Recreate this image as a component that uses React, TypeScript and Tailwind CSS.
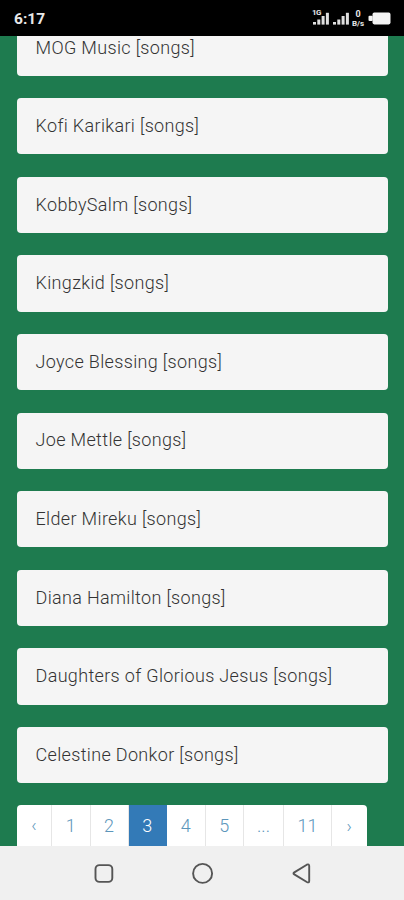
import React from 'react';

const artists = [
  'MOG Music',
  'Kofi Karikari',
  'KobbySalm',
  'Kingzkid',
  'Joyce Blessing',
  'Joe Mettle',
  'Elder Mireku',
  'Diana Hamilton',
  'Daughters of Glorious Jesus',
  'Celestine Donkor',
];

const pages = [
  { label: '‹', width: 'w-[35px]' },
  { label: '1', width: 'w-[38.5px]' },
  { label: '2', width: 'w-[38px]' },
  { label: '3', width: 'w-[38.5px]' },
  { label: '4', width: 'w-[38.5px]' },
  { label: '5', width: 'w-[38.5px]' },
  { label: '...', width: 'w-[40px]' },
  { label: '11', width: 'w-[48px]' },
  { label: '›', width: 'w-[34.5px]' },
];

const SignalBars: React.FC = () => (
  <svg width="16" height="13" viewBox="0 0 16 13" fill="#dedede">
    <rect x="0" y="10" width="3" height="2.6" />
    <rect x="4.3" y="7.5" width="3" height="5.1" />
    <rect x="8.6" y="4" width="3" height="8.6" />
    <rect x="12.9" y="0.8" width="3" height="11.8" />
  </svg>
);

const StatusBar: React.FC = () => (
  <header className="flex h-[35.5px] shrink-0 items-start justify-between bg-black pl-[14px] pr-[13px] text-[#e8e8e8]">
    <span className="mt-[9px] text-[15.5px] font-bold leading-5">6:17</span>
    <div className="mt-[9px] flex h-[18px] items-start">
      <div className="relative mt-[3px]">
        <SignalBars />
        <span className="absolute -left-px -top-[3px] text-[8px] font-bold leading-[8px] tracking-[-0.5px]">1G</span>
      </div>
      <div className="ml-[3.5px] mt-[3px]">
        <SignalBars />
      </div>
      <div className="ml-[2.5px] flex w-[14px] flex-col items-center text-[9px] font-bold leading-[10px]">
        <span>0</span>
        <span className="text-[8px] leading-[9px]">B/s</span>
      </div>
      <svg className="ml-[3px] mt-[3px]" width="23" height="13" viewBox="0 0 23 13" fill="#f4f4f4">
        <rect x="4.5" y="0.6" width="18" height="11.8" rx="1.8" />
        <rect x="0.5" y="3.8" width="4.2" height="5.2" rx="1" />
      </svg>
    </div>
  </header>
);

const Pagination: React.FC = () => (
  <nav className="flex h-[46px] w-[349.5px] shrink-0 overflow-hidden rounded-[4px] bg-white text-[18px] font-light text-[#5c96bb]">
    {pages.map(({ label, width }) => (
      <button
        key={label}
        className={`${width} shrink-0 border-r pb-[5px] last:border-r-0 ${
          label === '3' ? 'border-[#337ab7] bg-[#337ab7] text-white' : 'border-[#e6e6e6]'
        }`}
      >
        {label}
      </button>
    ))}
  </nav>
);

const NavigationBar: React.FC = () => (
  <footer className="flex h-[54px] shrink-0 items-center justify-center bg-[#f0f0f0]">
    <svg width="220" height="24" viewBox="0 0 220 24" fill="none" stroke="#555555" strokeWidth="1.9" strokeLinejoin="round">
      <rect x="3.5" y="4.1" width="16.8" height="16.8" rx="4" />
      <circle cx="110.6" cy="12.4" r="9.5" />
      <path d="M202.3 11.4L214.8 3.7Q217.2 2.6 217.2 5.1V19.9Q217.2 22.2 214.8 21L202.3 13.4Q200.7 12.4 202.3 11.4Z" />
    </svg>
  </footer>
);

export default function App() {
  return (
    <div className="flex h-[900px] w-[404px] flex-col overflow-hidden font-['Roboto',sans-serif]">
      <StatusBar />
      <main className="min-h-0 flex-1 overflow-hidden bg-[#1e7b4f] pl-[17px] pr-4">
        <div className="-mt-[15.8px] flex flex-col gap-[22.4px]">
          {artists.map((artist) => (
            <a
              key={artist}
              className="flex h-[56.2px] shrink-0 items-center rounded-[4px] bg-[#f5f5f5] pb-[1.5px] pl-[18.5px] text-[18px] font-light tracking-[0.34px] text-[#333333]"
            >
              {artist} [songs]
            </a>
          ))}
          <Pagination />
        </div>
      </main>
      <NavigationBar />
    </div>
  );
}
